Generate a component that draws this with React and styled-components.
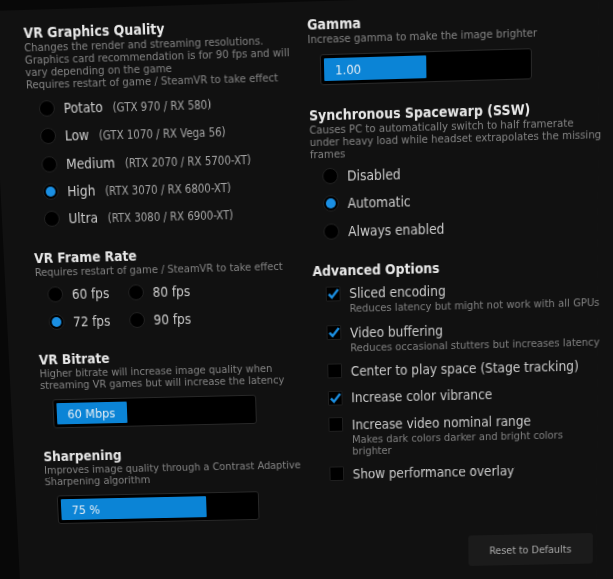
import React from "react";
import styled, { createGlobalStyle } from "styled-components";

const GlobalStyle = createGlobalStyle`
  html, body {
    margin: 0;
    padding: 0;
    background: #111111;
  }
  body {
    font-family: "DejaVu Sans Condensed", "DejaVu Sans", Verdana, sans-serif;
    font-stretch: condensed;
  }
`;

const qualities = [
  { name: "Potato", hint: "(GTX 970 / RX 580)" },
  { name: "Low", hint: "(GTX 1070 / RX Vega 56)" },
  { name: "Medium", hint: "(RTX 2070 / RX 5700-XT)" },
  { name: "High", hint: "(RTX 3070 / RX 6800-XT)", selected: true },
  { name: "Ultra", hint: "(RTX 3080 / RX 6900-XT)" },
];

const frameRates = [
  { name: "60 fps" },
  { name: "80 fps" },
  { name: "72 fps", selected: true },
  { name: "90 fps" },
];

const spacewarp = [
  { name: "Disabled" },
  { name: "Automatic", selected: true },
  { name: "Always enabled" },
];

const advanced = [
  {
    name: "Sliced encoding",
    checked: true,
    desc: ["Reduces latency but might not work with all GPUs"],
  },
  {
    name: "Video buffering",
    checked: true,
    desc: ["Reduces occasional stutters but increases latency"],
  },
  { name: "Center to play space (Stage tracking)" },
  { name: "Increase color vibrance", checked: true },
  {
    name: "Increase video nominal range",
    desc: ["Makes dark colors darker and bright colors", "brighter"],
  },
  { name: "Show performance overlay" },
];

function RadioOption({ name, hint, selected }) {
  return (
    <Row>
      <Radio $on={selected} />
      <Label>
        {name}
        {hint ? <Hint>{hint}</Hint> : null}
      </Label>
    </Row>
  );
}

function CheckOption({ name, checked, desc }) {
  return (
    <Row>
      <Check>
        {checked ? (
          <svg width="15" height="15" viewBox="0 0 15 15">
            <path
              d="M3 7.6 L6.1 10.9 L12.6 3"
              fill="none"
              stroke="#1b8fe2"
              strokeWidth="2.4"
            />
          </svg>
        ) : null}
      </Check>
      <Label>{name}</Label>
      {desc
        ? desc.map(line => <OptionDesc key={line}>{line}</OptionDesc>)
        : null}
    </Row>
  );
}

export default function App() {
  return (
    <>
      <GlobalStyle />
      <Frame>
        <Sheet>
          <Panel>
            <Column>
              <Section $gap={0}>
                <Title>VR Graphics Quality</Title>
                <Desc>
                  Changes the render and streaming resolutions.
                  <br />
                  Graphics card recommendation is for 90 fps and will
                  <br />
                  vary depending on the game
                  <br />
                  Requires restart of game / SteamVR to take effect
                </Desc>
                <Options>
                  {qualities.map(q => (
                    <RadioOption key={q.name} {...q} />
                  ))}
                </Options>
              </Section>

              <Section>
                <Title>VR Frame Rate</Title>
                <Desc>Requires restart of game / SteamVR to take effect</Desc>
                <RateGrid>
                  {frameRates.map(r => (
                    <RadioOption key={r.name} {...r} />
                  ))}
                </RateGrid>
              </Section>

              <Section>
                <Title>VR Bitrate</Title>
                <Desc>
                  Higher bitrate will increase image quality when
                  <br />
                  streaming VR games but will increase the latency
                </Desc>
                <Slider>
                  <Fill $pct={36}>60 Mbps</Fill>
                </Slider>
              </Section>

              <Section>
                <Title>Sharpening</Title>
                <Desc>
                  Improves image quality through a Contrast Adaptive
                  <br />
                  Sharpening algorithm
                </Desc>
                <Slider>
                  <Fill $pct={75}>75 %</Fill>
                </Slider>
              </Section>
            </Column>

            <Column>
              <Section $gap={0}>
                <Title>Gamma</Title>
                <Desc>Increase gamma to make the image brighter</Desc>
                <Slider>
                  <Fill $pct={50}>1.00</Fill>
                </Slider>
              </Section>

              <Section>
                <Title>Synchronous Spacewarp (SSW)</Title>
                <Desc>
                  Causes PC to automatically switch to half framerate
                  <br />
                  under heavy load while headset extrapolates the missing
                  <br />
                  frames
                </Desc>
                <Options $top={1}>
                  {spacewarp.map(s => (
                    <RadioOption key={s.name} {...s} />
                  ))}
                </Options>
              </Section>

              <Section $gap={16.5}>
                <Title>Advanced Options</Title>
                <Options $top={1}>
                  {advanced.map(a => (
                    <CheckOption key={a.name} {...a} />
                  ))}
                </Options>
              </Section>

              <ResetButton>Reset to Defaults</ResetButton>
            </Column>
          </Panel>
        </Sheet>
      </Frame>
    </>
  );
}

const Frame = styled.div`
  width: 613px;
  height: 579px;
  overflow: hidden;
  background: #111111;
`;

// the reference is a photo of a monitor taken at a slight angle, so the
// flat page is projected onto the same quad
const Sheet = styled.div`
  width: 627px;
  height: 700px;
  margin: -20px 0 0 -30px;
  padding: 27px 0 0 23px;
  box-sizing: border-box;
  transform-origin: 30px 20px;
  transform: matrix3d(
    0.99346, -0.029923, 0, -0.000017845,
    0.050911, 1.039085, 0, 0.00009152,
    0, 0, 1, 0,
    -1.765, 3.48, 0, 0.998232
  );
`;

// the offset shadow is the dark monitor bezel along the top and left edges
const Panel = styled.div`
  width: 604px;
  height: 670px;
  box-sizing: border-box;
  padding: 13.4px 0 0 31px;
  background: #111111;
  box-shadow: -40px -40px 0 #080808;
  display: grid;
  grid-template-columns: 284px 284.8px;
  align-items: start;
`;

const Column = styled.div`
  display: flex;
  flex-direction: column;
`;

const Section = styled.section`
  display: flex;
  flex-direction: column;
  margin-top: ${p => (p.$gap ?? 16)}px;
`;

const Title = styled.h2`
  margin: 0;
  font-size: 14px;
  line-height: 18px;
  font-weight: bold;
  color: #e8e8e8;
  white-space: nowrap;
`;

const Desc = styled.div`
  font-size: 11.3px;
  line-height: 12px;
  color: #848484;
  white-space: nowrap;
`;

const Options = styled.div`
  display: flex;
  flex-direction: column;
  margin-top: ${p => (p.$top ?? 3)}px;
`;

const RateGrid = styled.div`
  display: grid;
  grid-template-columns: 83px 83px;
  margin-top: 3px;
`;

const Row = styled.div`
  display: grid;
  grid-template-columns: 16px 1fr;
  column-gap: 9px;
  align-items: start;
  justify-items: start;
  padding: 3.65px 0 3.65px 12px;
`;

const Radio = styled.span`
  position: relative;
  width: 16px;
  height: 16px;
  margin-top: 2px;
  box-sizing: border-box;
  border-radius: 50%;
  background: #000;
  border: 1px solid #232323;

  &::after {
    content: "";
    display: ${p => (p.$on ? "block" : "none")};
    position: absolute;
    left: 2px;
    top: 2px;
    width: 10px;
    height: 10px;
    border-radius: 50%;
    background: #1a8fe3;
  }
`;

const Check = styled.span`
  width: 15px;
  height: 15px;
  margin: 2.5px 0 0 0.5px;
  box-sizing: border-box;
  background: #000;
  border: 1px solid #1f1f1f;
  border-radius: 1px;
  display: flex;
  align-items: center;
  justify-content: center;

  svg {
    display: block;
    flex: none;
  }
`;

const Label = styled.span`
  height: 20px;
  font-size: 13.8px;
  line-height: 20px;
  color: #cccccc;
  white-space: nowrap;
`;

const Hint = styled.span`
  margin-left: 10px;
  font-size: 11.5px;
  line-height: 12px;
  color: #a4a4a4;
`;

const OptionDesc = styled.span`
  grid-column: 2;
  font-size: 11.3px;
  line-height: 12px;
  color: #808080;
  white-space: nowrap;
`;

const Slider = styled.div`
  width: 211px;
  height: 30px;
  margin: 8px 0 4px 12px;
  padding: 3px;
  box-sizing: border-box;
  background: #000;
  border: 1px solid #282828;
  border-radius: 3px;
  display: flex;
`;

const Fill = styled.div`
  width: ${p => p.$pct}%;
  height: 100%;
  box-sizing: border-box;
  padding-left: 11px;
  background: #0b84d6;
  border-radius: 1px;
  display: flex;
  align-items: center;
  font-size: 13px;
  color: #e6eef4;
  white-space: nowrap;
`;

const ResetButton = styled.button`
  align-self: flex-end;
  width: 129px;
  height: 32px;
  margin-top: 54px;
  padding: 0;
  border: none;
  border-radius: 3px;
  background: #1b1b1b;
  color: #a9a9a9;
  font-family: inherit;
  font-stretch: inherit;
  font-size: 11px;
`;
